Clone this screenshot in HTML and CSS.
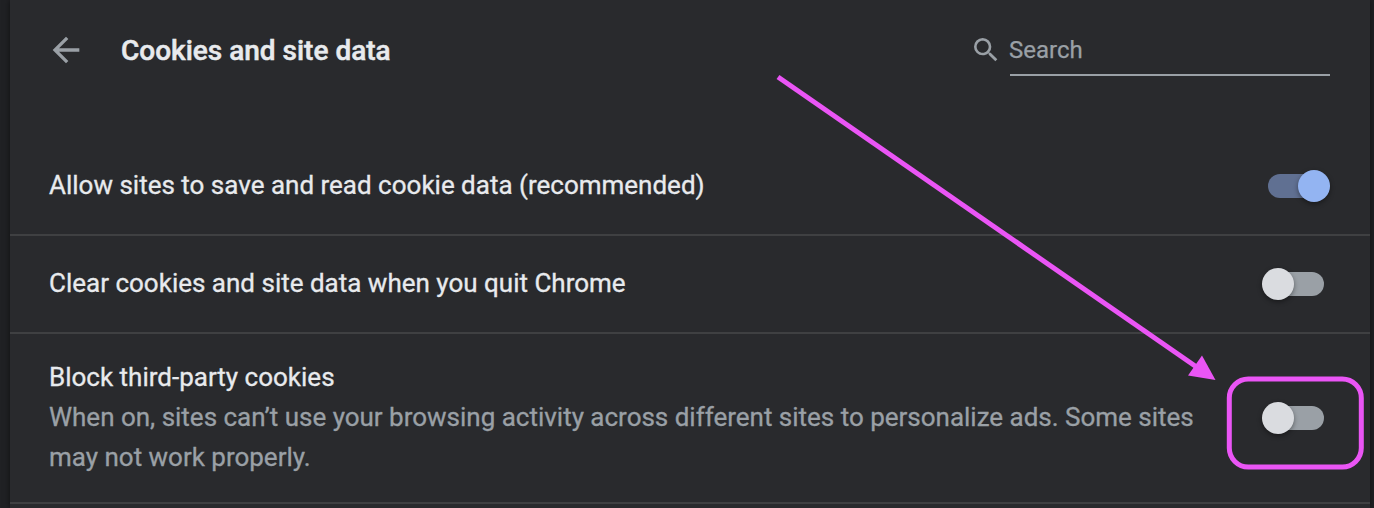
FILE: index.html
```html
<!DOCTYPE html>
<html lang="en">
<head>
<meta charset="utf-8">
<title>Cookies and site data</title>
<link rel="stylesheet" href="styles.css">
</head>
<body>
<main class="card">
  <header class="header">
    <svg class="back" viewBox="0 0 24 24"><path d="M20 11H7.830l5.590-5.590L12 4l-8 8 8 8 1.410-1.410L7.830 13H20z"/></svg>
    <h1 class="title">Cookies and site data</h1>
    <svg class="glass" viewBox="0 0 24 24"><path d="M15.500 14h-.79l-.28-.27A6.471 6.471 0 0 0 16 9.500 6.500 6.500 0 1 0 9.500 16c1.610 0 3.090-.59 4.230-1.570l.27.28v.79l5 4.990L20.490 19zm-6 0C7.010 14 5 11.990 5 9.500S7.010 5 9.500 5 14 7.010 14 9.500 11.990 14 9.500 14z"/></svg>
    <div class="search">Search</div>
  </header>
  <section class="row first">
    <div class="label">Allow sites to save and read cookie data (recommended)</div>
    <div class="toggle on"></div>
  </section>
  <section class="row second">
    <div class="label">Clear cookies and site data when you quit Chrome</div>
    <div class="toggle"></div>
  </section>
  <section class="row third">
    <div class="copy">
      <div class="label">Block third-party cookies</div>
      <div class="sub">When on, sites can’t use your browsing activity across different sites to personalize ads. Some sites<br>may not work properly.</div>
    </div>
    <div class="toggle"></div>
  </section>
</main>
<svg class="annotation" viewBox="0 0 1374 508">
  <path class="shaft" d="M778 77 1198 368"/>
  <path class="head" d="M1215.500 380 1188 375.500 1202 355.500Z"/>
  <rect class="ring" x="1229.300" y="379" width="132" height="88" rx="19"/>
</svg>
</body>
</html>
```
FILE: styles.css
```css
* { box-sizing: border-box; }
body { margin: 0; width: 1374px; height: 508px; overflow: hidden; background: #202124; font-family: Roboto, sans-serif; color: #e8eaed; }
.card { margin: 0 4px 0 10px; height: 508px; background: #292a2d; box-shadow: 0 0 6px #0008; }
.header { height: 137px; padding: 26px 40px 0 36px; display: flex; align-items: flex-start; }
.back { width: 40px; height: 40px; margin-top: 4px; fill: #9aa0a6; }
.title { flex: 1; margin: 0 0 0 35px; font-size: 28px; line-height: 49px; font-weight: 500; white-space: nowrap; -webkit-text-stroke: 0.500px; }
.glass { width: 32px; height: 32px; margin: 8px 8px 0 0; fill: #9aa0a6; }
.search { width: 320px; height: 50px; border-bottom: 2px solid #9aa0a6; font-size: 24px; line-height: 48px; text-indent: -1px; color: #9aa0a6; -webkit-text-stroke: 0.250px; }
.row { display: flex; align-items: center; justify-content: space-between; padding: 0 46px 0 39px; border-bottom: 2px solid #3f4042; white-space: nowrap; }
.first { height: 99px; padding-right: 40px; }
.second { height: 98px; }
.third { height: 170px; }
.label, .sub { font-size: 26px; line-height: 40px; -webkit-text-stroke: 0.300px; }
.row > .label, .copy { padding-bottom: 2px; }
.sub { color: #9aa0a6; letter-spacing: -0.010px; }
.toggle { width: 62px; height: 32px; display: flex; align-items: center; position: relative; }
.toggle::before { content: ""; width: 56px; height: 24px; margin-left: 6px; border-radius: 12px; background: #9aa0a6; }
.toggle::after { content: ""; position: absolute; left: 0; top: 0; width: 32px; height: 32px; border-radius: 50%; background: #dadce0; box-shadow: 0 2px 5px #0006; }
.on::before { margin-left: 0; background: #607092; }
.on::after { left: 30px; background: #93b4f2; }
.annotation { position: absolute; left: 0; top: 0; width: 1374px; height: 508px; }
.shaft { fill: none; stroke: #ea55f5; stroke-width: 5; }
.head { fill: #ea55f5; }
.ring { fill: none; stroke: #ea55f5; stroke-width: 5; }
```
